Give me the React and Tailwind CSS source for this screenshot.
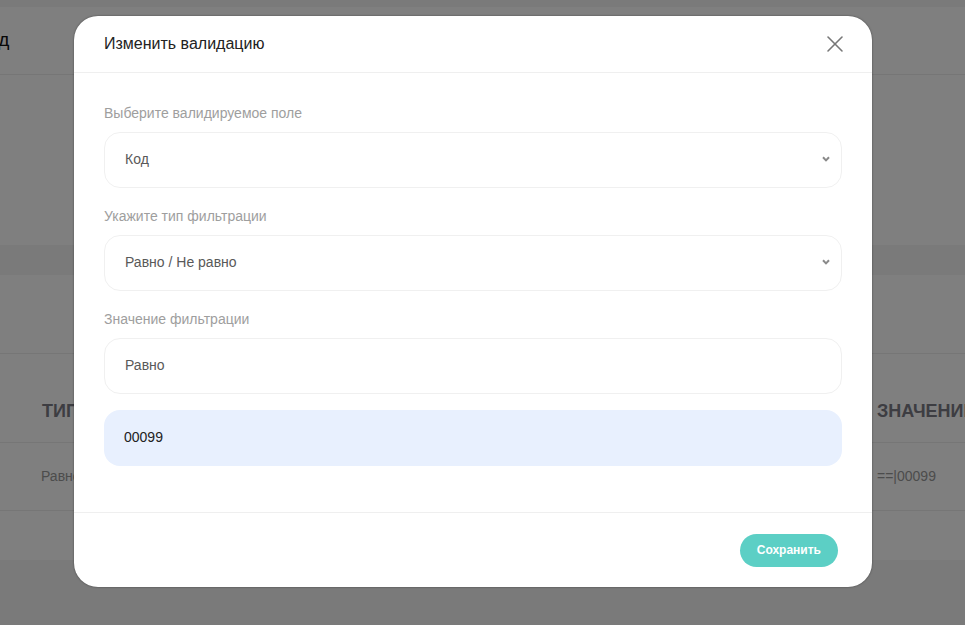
import { X } from "lucide-react";

const fields = [
  { label: "Выберите валидируемое поле", value: "Код", select: true },
  { label: "Укажите тип фильтрации", value: "Равно / Не равно", select: true },
  { label: "Значение фильтрации", value: "Равно", select: false },
];

function Chevron() {
  return (
    <svg width="8" height="6" viewBox="0 0 8 6" className="text-[#8a8a8a]">
      <polyline points="1,1.2 4,4.4 7,1.2" fill="none" stroke="currentColor" strokeWidth="2" />
    </svg>
  );
}

export default function App() {
  return (
    <div className="relative h-[625px] overflow-hidden bg-[#f4f4f4] font-['Liberation_Sans',Arial,sans-serif]">
      {/* page under the modal */}
      <div className="pt-[7px]">
        <div className="h-[238px] bg-white">
          <div className="flex h-[68px] items-center border-b border-[#ececec]">
            <span className="-ml-[23px] text-[19px] text-[#111]">Код</span>
          </div>
        </div>
        <div className="mt-[30px] h-[285px] bg-white">
          <div className="h-[79px] border-b border-[#ececec]" />
          <div className="flex h-[89px] items-end whitespace-nowrap border-b border-[#ececec] pb-[17px] text-[18px] font-bold uppercase text-[#7a7a85]">
            <div className="w-[877px] shrink-0 pl-[42px]">Тип</div>
            <div>Значение</div>
          </div>
          <div className="flex h-[68px] items-center whitespace-nowrap border-b border-[#ececec] text-[14px] text-[#999]">
            <div className="w-[877px] shrink-0 pl-[41px]">Равно / Не равно</div>
            <div>==|00099</div>
          </div>
        </div>
      </div>

      {/* overlay + modal */}
      <div className="absolute inset-0 bg-black/50 pt-[16px]">
        <div className="ml-[74px] w-[798px] overflow-hidden rounded-3xl bg-white shadow-[0_0_2px_rgba(0,0,0,0.5)]">
          <div className="flex h-[57px] items-center justify-between border-b border-[#efefef] pl-[30px] pr-[23px]">
            <h2 className="text-[16px] text-[#222]">Изменить валидацию</h2>
            <X size={28} strokeWidth={1.3} className="text-[#777]" />
          </div>

          <div className="flex flex-col px-[30px] pb-[46px] pt-[30px]">
            {fields.map((f) => (
              <div key={f.label} className="mb-[18px] flex flex-col">
                <label className="mb-[9px] text-[14px] leading-5 text-[#9e9e9e]">{f.label}</label>
                <div className="flex h-[56px] items-center justify-between rounded-2xl border border-[#f0f0f0] pb-[2px] pl-[20px] pr-[11px] text-[14px] text-[#595959]">
                  <span>{f.value}</span>
                  {f.select && <Chevron />}
                </div>
              </div>
            ))}
            <div className="-mt-[2px] flex h-[56px] items-center rounded-2xl bg-[#e8f0fe] pb-[2px] pl-[20px] text-[14px] text-[#222]">
              00099
            </div>
          </div>

          <div className="flex h-[75px] items-center justify-end border-t border-[#efefef] pr-[34px]">
            <button className="h-[33px] rounded-full bg-[#5ccfc5] px-[17px] text-[12px] font-bold text-white">
              Сохранить
            </button>
          </div>
        </div>
      </div>
    </div>
  );
}
